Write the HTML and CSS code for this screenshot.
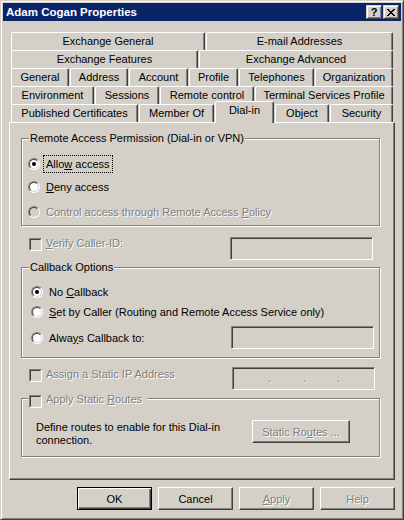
FILE: index.html
```html
<!DOCTYPE html>
<html>
<head>
<meta charset="utf-8">
<link rel="stylesheet" href="styles.css">
</head>
<body>
<div class="window">
  <div class="titlebar">
    <span class="title">Adam Cogan Properties</span>
    <div class="caption-btns">
      <span class="cbtn cbtn-help">?</span>
      <span class="cbtn"><svg width="8" height="7" viewBox="0 0 8 7" shape-rendering="crispEdges"><path d="M0 0h2v1H0zM6 0h2v1H6zM1 1h2v1H1zM5 1h2v1H5zM2 2h4v1H2zM3 3h2v1H3zM2 4h4v1H2zM1 5h2v1H1zM5 5h2v1H5zM0 6h2v1H0zM6 6h2v1H6z" fill="#000"/></svg></span>
    </div>
  </div>

  <div class="tabs">
    <div class="tabrow">
      <div class="tab w194">Exchange General</div>
      <div class="tab w187">E-mail Addresses</div>
    </div>
    <div class="tabrow">
      <div class="tab w187">Exchange Features</div>
      <div class="tab w194">Exchange Advanced</div>
    </div>
    <div class="tabrow">
      <div class="tab w58">General</div>
      <div class="tab w58">Address</div>
      <div class="tab w59">Account</div>
      <div class="tab w49">Profile</div>
      <div class="tab w75">Telephones</div>
      <div class="tab w78">Organization</div>
    </div>
    <div class="tabrow">
      <div class="tab w83">Environment</div>
      <div class="tab w64">Sessions</div>
      <div class="tab w94">Remote control</div>
      <div class="tab w138">Terminal Services Profile</div>
    </div>
    <div class="tabrow">
      <div class="tab w127">Published Certificates</div>
      <div class="tab w75">Member Of</div>
      <div class="tab w59 sel">Dial-in</div>
      <div class="tab w54">Object</div>
      <div class="tab w63">Security</div>
    </div>
  </div>

  <div class="panel">
    <div class="group g1">
      <span class="legend">Remote Access Permission (Dial-in or VPN)</span>
      <div class="opt">
        <span class="radio on"></span>
        <span class="lbl focus">Allo<u>w</u> access</span>
      </div>
      <div class="opt opt-deny">
        <span class="radio"></span>
        <span class="lbl"><u>D</u>eny access</span>
      </div>
      <div class="opt opt-ctrl">
        <span class="radio disabled"></span>
        <span class="lbl dis">Control access through Remote Access <u>P</u>olicy</span>
      </div>
    </div>

    <div class="checkrow verify">
      <span class="check"></span>
      <span class="clbl dis"><u>V</u>erify Caller-ID:</span>
      <span class="edit edit-verify"></span>
    </div>

    <div class="group g2">
      <span class="legend">Callback Options</span>
      <div class="opt">
        <span class="radio on"></span>
        <span class="lbl">No <u>C</u>allback</span>
      </div>
      <div class="opt opt-set">
        <span class="radio"></span>
        <span class="lbl"><u>S</u>et by Caller (Routing and Remote Access Service only)</span>
      </div>
      <div class="opt opt-always">
        <span class="radio"></span>
        <span class="lbl">Alwa<u>y</u>s Callback to:</span>
        <span class="edit edit-cb"></span>
      </div>
    </div>

    <div class="checkrow iprow">
      <span class="check"></span>
      <span class="clbl dis">Assi<u>g</u>n a Static IP Address</span>
      <span class="edit edit-ip">
        <span class="ipdot d1 dis">.</span>
        <span class="ipdot d2 dis">.</span>
        <span class="ipdot d3 dis">.</span>
      </span>
    </div>

    <div class="group g3">
      <span class="legend legend-check">
        <span class="check"></span>
        <span class="clbl dis">Apply Static <u>R</u>outes</span>
      </span>
      <div class="routes-text">Define routes to enable for this Dial-in<br>connection.</div>
      <div class="btn btn-routes"><span class="dis">Static Ro<u>u</u>tes ...</span></div>
    </div>
  </div>

  <div class="buttons">
    <div class="btn default">OK</div>
    <div class="btn">Cancel</div>
    <div class="btn"><span class="dis"><u>A</u>pply</span></div>
    <div class="btn"><span class="dis">Help</span></div>
  </div>
</div>
</body>
</html>
```

FILE: styles.css
```css
* { box-sizing: border-box; }
html, body { margin: 0; padding: 0; }
body {
  font-family: "Liberation Sans", Arial, sans-serif;
  font-size: 11px;
  color: #000;
  background: #D4D0C8;
}

.window {
  width: 404px;
  height: 520px;
  background: #D4D0C8;
  border: 1px solid;
  border-color: #D4D0C8 #404040 #404040 #D4D0C8;
  box-shadow: inset 1px 1px 0 #fff, inset -1px -1px 0 #808080;
  padding: 2px;
}

/* title bar */
.titlebar {
  height: 18px;
  background: #0A246A;
  display: flex;
  align-items: flex-start;
}
.title {
  color: #fff;
  font-weight: bold;
  font-size: 11.5px;
  line-height: 18px;
  padding-left: 3px;
}
.caption-btns {
  margin-left: auto;
  margin-top: 2px;
  margin-right: 2px;
  display: flex;
  gap: 1px;
}
.cbtn {
  width: 16px;
  height: 14px;
  background: #D4D0C8;
  border: 1px solid;
  border-color: #D4D0C8 #404040 #404040 #D4D0C8;
  box-shadow: inset 1px 1px 0 #fff, inset -1px -1px 0 #808080;
  display: flex;
  align-items: center;
  justify-content: center;
}
.cbtn-help {
  font-weight: bold;
  font-size: 11px;
  line-height: 12px;
}

/* tabs */
.tabs { margin: 11px 8px 0; }
.tabrow { display: flex; height: 18px; }
.tab {
  flex: none;
  height: 18px;
  border: 1px solid;
  border-bottom: 0;
  border-color: #fff #404040 transparent #fff;
  border-radius: 2px 2px 0 0;
  box-shadow: inset -1px 0 0 #808080;
  text-align: center;
  line-height: 16px;
  margin-right: 1px;
  white-space: nowrap;
  background: #D4D0C8;
}
.tab:last-child { margin-right: 0; }
.tab.sel {
  height: 22px;
  margin-top: -3px;
  line-height: 17px;
  position: relative;
  z-index: 1;
}
.w49 { width: 49px; }
.w54 { width: 54px; }
.w58 { width: 58px; }
.w59 { width: 59px; }
.w63 { width: 63px; }
.w64 { width: 64px; }
.w75 { width: 75px; }
.w78 { width: 78px; }
.w83 { width: 83px; }
.w94 { width: 94px; }
.w127 { width: 127px; }
.w138 { width: 138px; }
.w187 { width: 187px; }
.w194 { width: 194px; }

/* panel */
.panel {
  margin: 0 6px;
  height: 358px;
  border: 1px solid;
  border-color: #fff #404040 #404040 #fff;
  box-shadow: inset -1px -1px 0 #808080;
  display: flow-root;
}

.group {
  position: relative;
  margin-left: 11px;
  width: 359px;
  border: 1px solid #808080;
  box-shadow: 1px 1px 0 #fff, inset 1px 1px 0 #fff;
}
.legend {
  position: absolute;
  top: -7px;
  left: 7px;
  padding: 0 1px;
  line-height: 13px;
  background: #D4D0C8;
  white-space: nowrap;
}

.g1 { margin-top: 15px; padding: 17px 0 5px 6px; }
.g2 { margin-top: 7px; padding: 16px 5px 8px 9px; }
.g3 {
  margin-top: 8px;
  padding: 21px 29px 9px 14px;
  display: flex;
  align-items: flex-start;
}

.opt { display: flex; align-items: center; height: 16px; }
.opt-deny { margin-top: 7px; }
.opt-ctrl { margin-top: 9px; }
.opt-set { margin-top: 4px; }
.opt-always { margin-top: 6px; height: 23px; }

.lbl {
  margin-left: 4px;
  padding: 0 2px;
  line-height: 16px;
  white-space: nowrap;
}
.focus { outline: 1px dotted #000; }
.dis { color: #808080; text-shadow: 1px 1px 0 #fff; }

/* radio */
.radio {
  flex: none;
  position: relative;
  width: 12px;
  height: 12px;
  border-radius: 50%;
  border: 1px solid;
  border-color: #808080 #fff #fff #808080;
  background: #fff;
}
.radio::before {
  content: "";
  position: absolute;
  inset: 0;
  border-radius: 50%;
  border: 1px solid;
  border-color: #404040 #D4D0C8 #D4D0C8 #404040;
}
.radio.on::after {
  content: "";
  position: absolute;
  left: 3px;
  top: 3px;
  width: 4px;
  height: 4px;
  border-radius: 50%;
  background: #000;
}
.radio.disabled { background: #D4D0C8; }

/* checkbox */
.check {
  flex: none;
  position: relative;
  width: 13px;
  height: 13px;
  border: 1px solid;
  border-color: #808080 #fff #fff #808080;
  background: #D4D0C8;
}
.check::before {
  content: "";
  position: absolute;
  inset: 0;
  border: 1px solid;
  border-color: #404040 #D4D0C8 #D4D0C8 #404040;
}

.checkrow {
  display: flex;
  align-items: flex-start;
  margin-left: 19px;
}
.clbl { margin-left: 4px; line-height: 13px; white-space: nowrap; }
.verify { margin-top: 11px; }
.verify .check { margin-top: 1px; }
.iprow { margin-top: 9px; }
.iprow .check { margin-top: 2px; }
.iprow .clbl { margin-top: 1px; }

/* edit boxes */
.edit {
  flex: none;
  width: 143px;
  height: 23px;
  border: 1px solid;
  border-color: #808080 #fff #fff #808080;
  box-shadow: inset 1px 1px 0 #404040, inset -1px -1px 0 #D4D0C8;
  background: #D4D0C8;
  margin-left: auto;
}
.edit-verify { margin-right: 21px; }
.edit-ip { margin-right: 19px; display: flex; line-height: 21px; }
.ipdot { text-align: right; }
.d1 { width: 38px; }
.d2 { width: 35px; }
.d3 { width: 34px; }

/* static routes group */
.legend-check {
  top: -4px;
  left: 6px;
  padding: 0 5px 0 1px;
  display: flex;
  align-items: flex-start;
}
.legend-check .clbl { margin-top: -2px; }
.routes-text { margin-top: 1px; line-height: 13px; white-space: nowrap; }

/* buttons */
.btn {
  flex: none;
  width: 75px;
  height: 23px;
  border: 1px solid;
  border-color: #fff #404040 #404040 #fff;
  box-shadow: inset -1px -1px 0 #808080;
  background: #D4D0C8;
  display: flex;
  align-items: center;
  justify-content: center;
  white-space: nowrap;
}
.btn.default {
  border-color: #000;
  box-shadow: inset 1px 1px 0 #fff, inset -1px -1px 0 #404040, inset -2px -2px 0 #808080;
}
.btn-routes { width: 98px; margin-left: auto; }

.buttons {
  display: flex;
  justify-content: flex-end;
  gap: 6px;
  margin: 7px 6px 0 0;
}
```
